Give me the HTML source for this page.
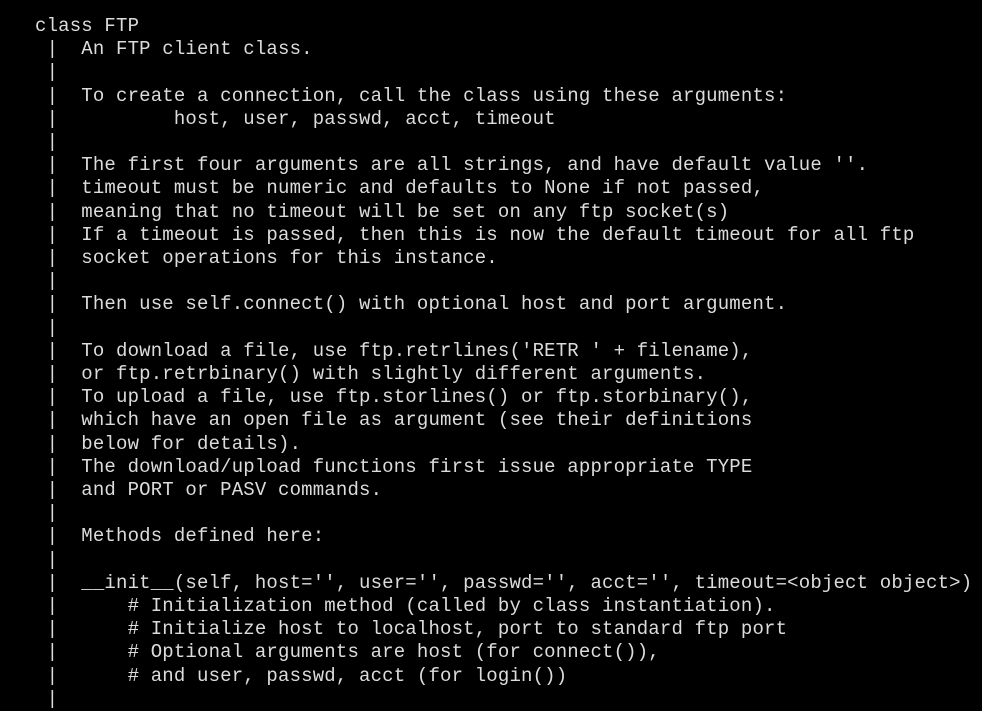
<!DOCTYPE html>
<html><head><meta charset="utf-8"><style>
html,body{margin:0;padding:0;background:#000;width:982px;height:694px;overflow:hidden}
pre{margin:0;position:absolute;left:35px;top:15px;font-family:"Liberation Mono",monospace;font-size:19px;letter-spacing:0.17px;line-height:23.2px;color:#dcdcdc;white-space:pre}
</style></head><body><pre>class FTP
 |  An FTP client class.
 |
 |  To create a connection, call the class using these arguments:
 |          host, user, passwd, acct, timeout
 |
 |  The first four arguments are all strings, and have default value ''.
 |  timeout must be numeric and defaults to None if not passed,
 |  meaning that no timeout will be set on any ftp socket(s)
 |  If a timeout is passed, then this is now the default timeout for all ftp
 |  socket operations for this instance.
 |
 |  Then use self.connect() with optional host and port argument.
 |
 |  To download a file, use ftp.retrlines('RETR ' + filename),
 |  or ftp.retrbinary() with slightly different arguments.
 |  To upload a file, use ftp.storlines() or ftp.storbinary(),
 |  which have an open file as argument (see their definitions
 |  below for details).
 |  The download/upload functions first issue appropriate TYPE
 |  and PORT or PASV commands.
 |
 |  Methods defined here:
 |
 |  __init__(self, host='', user='', passwd='', acct='', timeout=&lt;object object&gt;)
 |      # Initialization method (called by class instantiation).
 |      # Initialize host to localhost, port to standard ftp port
 |      # Optional arguments are host (for connect()),
 |      # and user, passwd, acct (for login())
 |</pre></body></html>
